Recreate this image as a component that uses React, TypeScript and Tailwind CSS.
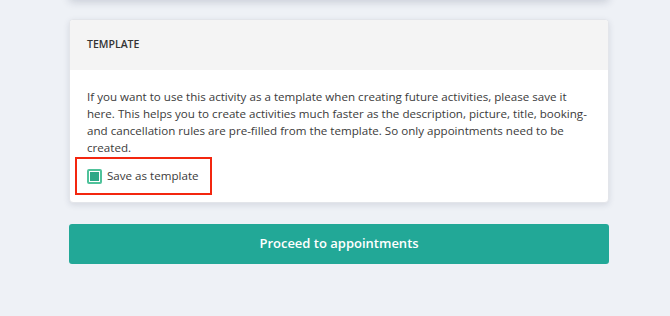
export default function App() {
  return (
    <div
      className="flow-root min-h-[316px] w-full bg-[#eef1f6]"
      style={{ fontFamily: '"Open Sans", "Noto Sans", sans-serif' }}
    >
      <div className="ml-[69px] w-[540px]">
        {/* bottom edge of the previous card */}
        <div className="-mt-[20px] h-[20px] rounded-b bg-white shadow-[0_2px_8px_rgba(30,40,70,0.18)]" />

        <section className="mt-[19px] overflow-hidden rounded border border-[#e3e5ea] bg-white shadow-[0_2px_6px_rgba(30,40,70,0.12)]">
          <div className="flex h-[50px] items-center bg-[#f4f4f4] px-[17px]">
            <h2 className="text-[10.5px] font-semibold uppercase text-[#333]">Template</h2>
          </div>
          <div className="px-[17px] pt-[18px] pb-[7px]">
            <p className="text-[11.6px] leading-[17px] text-[#3b3b3b]">
              If you want to use this activity as a template when creating future activities, please save it here. This helps you to create activities much faster as the description, picture, title, booking- and cancellation rules are pre-filled from the template. So only appointments need to be created.
            </p>
            <div className="-ml-[12px] mt-[1px] inline-flex h-[38px] w-[137px] items-center gap-[5px] border-2 border-[#f3260f] pl-[10px]">
              <span className="flex h-[15px] w-[15px] items-center justify-center rounded-[2px] border-2 border-[#4fc29a] bg-white">
                <span className="h-[9px] w-[9px] bg-[#2ea887]" />
              </span>
              <span className="text-[11.6px] text-[#3b3b3b]">Save as template</span>
            </div>
          </div>
        </section>

        <button className="mt-[21px] flex h-[40px] w-full items-center justify-center rounded-[3px] bg-[#22a897] text-[13px] font-semibold text-white">
          Proceed to appointments
        </button>
      </div>
    </div>
  );
}
